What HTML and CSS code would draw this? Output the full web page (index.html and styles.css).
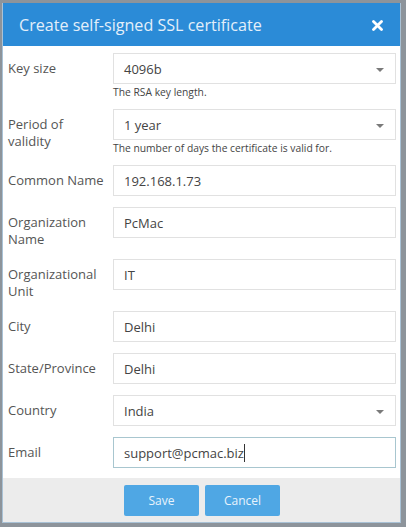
FILE: index.html
```html
<!DOCTYPE html>
<html>
<head>
<meta charset="utf-8">
<link rel="stylesheet" href="styles.css">
</head>
<body>
<div class="dialog">
  <div class="header">
    <span class="title">Create self-signed SSL certificate</span>
    <svg class="close" width="11" height="11" viewBox="0 0 11 11"><path d="M1.5 1.5 L9.5 9.5 M9.5 1.5 L1.5 9.5" stroke="#fff" stroke-width="2.8" stroke-linecap="round"/></svg>
  </div>
  <div class="body">
    <div class="row">
      <div class="label">Key size</div>
      <div class="field">
        <div class="box select">4096b<span class="caret"></span></div>
        <div class="help">The RSA key length.</div>
      </div>
    </div>
    <div class="row">
      <div class="label">Period of<br>validity</div>
      <div class="field">
        <div class="box select">1 year<span class="caret"></span></div>
        <div class="help">The number of days the certificate is valid for.</div>
      </div>
    </div>
    <div class="row">
      <div class="label">Common Name</div>
      <div class="field"><div class="box">192.168.1.73</div></div>
    </div>
    <div class="row">
      <div class="label">Organization<br>Name</div>
      <div class="field"><div class="box">PcMac</div></div>
    </div>
    <div class="row">
      <div class="label">Organizational<br>Unit</div>
      <div class="field"><div class="box">IT</div></div>
    </div>
    <div class="row">
      <div class="label">City</div>
      <div class="field"><div class="box">Delhi</div></div>
    </div>
    <div class="row">
      <div class="label">State/Province</div>
      <div class="field"><div class="box">Delhi</div></div>
    </div>
    <div class="row">
      <div class="label">Country</div>
      <div class="field"><div class="box select">India<span class="caret"></span></div></div>
    </div>
    <div class="row">
      <div class="label">Email</div>
      <div class="field"><div class="box focus"><span class="typed">support@pcmac.biz</span></div></div>
    </div>
  </div>
  <div class="footer">
    <button class="btn">Save</button>
    <button class="btn">Cancel</button>
  </div>
</div>
</body>
</html>
```

FILE: styles.css
```css
html, body {
  margin: 0;
  padding: 0;
  background: #8d949b;
  height: 527px;
  overflow: hidden;
}
body {
  font-family: "Open Sans", "DejaVu Sans", sans-serif;
}
.dialog {
  margin: 3px 5px 0 2px;
  width: 397px;
  border: 1px solid #a9c2d6;
  border-top: none;
  background: #fff;
}
.header {
  background: #2b8bd7;
  height: 43px;
  display: flex;
  align-items: center;
  justify-content: space-between;
  padding: 0 17px 0 16px;
}
.title {
  color: #e3effa;
  font-size: 16.1px;
}
.close {
  display: block;
  margin-top: 1px;
}
.body {
  padding: 7px 4px 10px 5px;
  display: flex;
  flex-direction: column;
  gap: 11px;
}
.row {
  display: grid;
  grid-template-columns: 105px 1fr;
}
.label {
  font-size: 13px;
  line-height: 17px;
  color: #555;
  padding-top: 7px;
}
.box {
  height: 29px;
  border: 1px solid #e1e1e1;
  box-sizing: content-box;
  padding: 0 10px;
  display: flex;
  align-items: center;
  font-size: 13px;
  color: #444;
  position: relative;
}
.select .caret {
  position: absolute;
  right: 11px;
  top: 14px;
  width: 0;
  height: 0;
  border-left: 4px solid transparent;
  border-right: 4px solid transparent;
  border-top: 4px solid #7a7a7a;
}
.focus {
  border-color: #a8c6cf;
}
.typed {
  border-right: 1px solid #333;
}
.help {
  font-size: 10.3px;
  color: #444;
  margin-top: 2px;
  line-height: 12px;
}
.footer {
  background: #ececec;
  height: 44px;
  display: flex;
  justify-content: center;
  align-items: center;
  gap: 6px;
  padding-left: 1px;
}
.btn {
  width: 75px;
  height: 31px;
  border: none;
  border-radius: 2px;
  background: #4fa7e4;
  color: #e8f3fc;
  font-family: "Open Sans", "DejaVu Sans", sans-serif;
  font-size: 12px;
}
```
